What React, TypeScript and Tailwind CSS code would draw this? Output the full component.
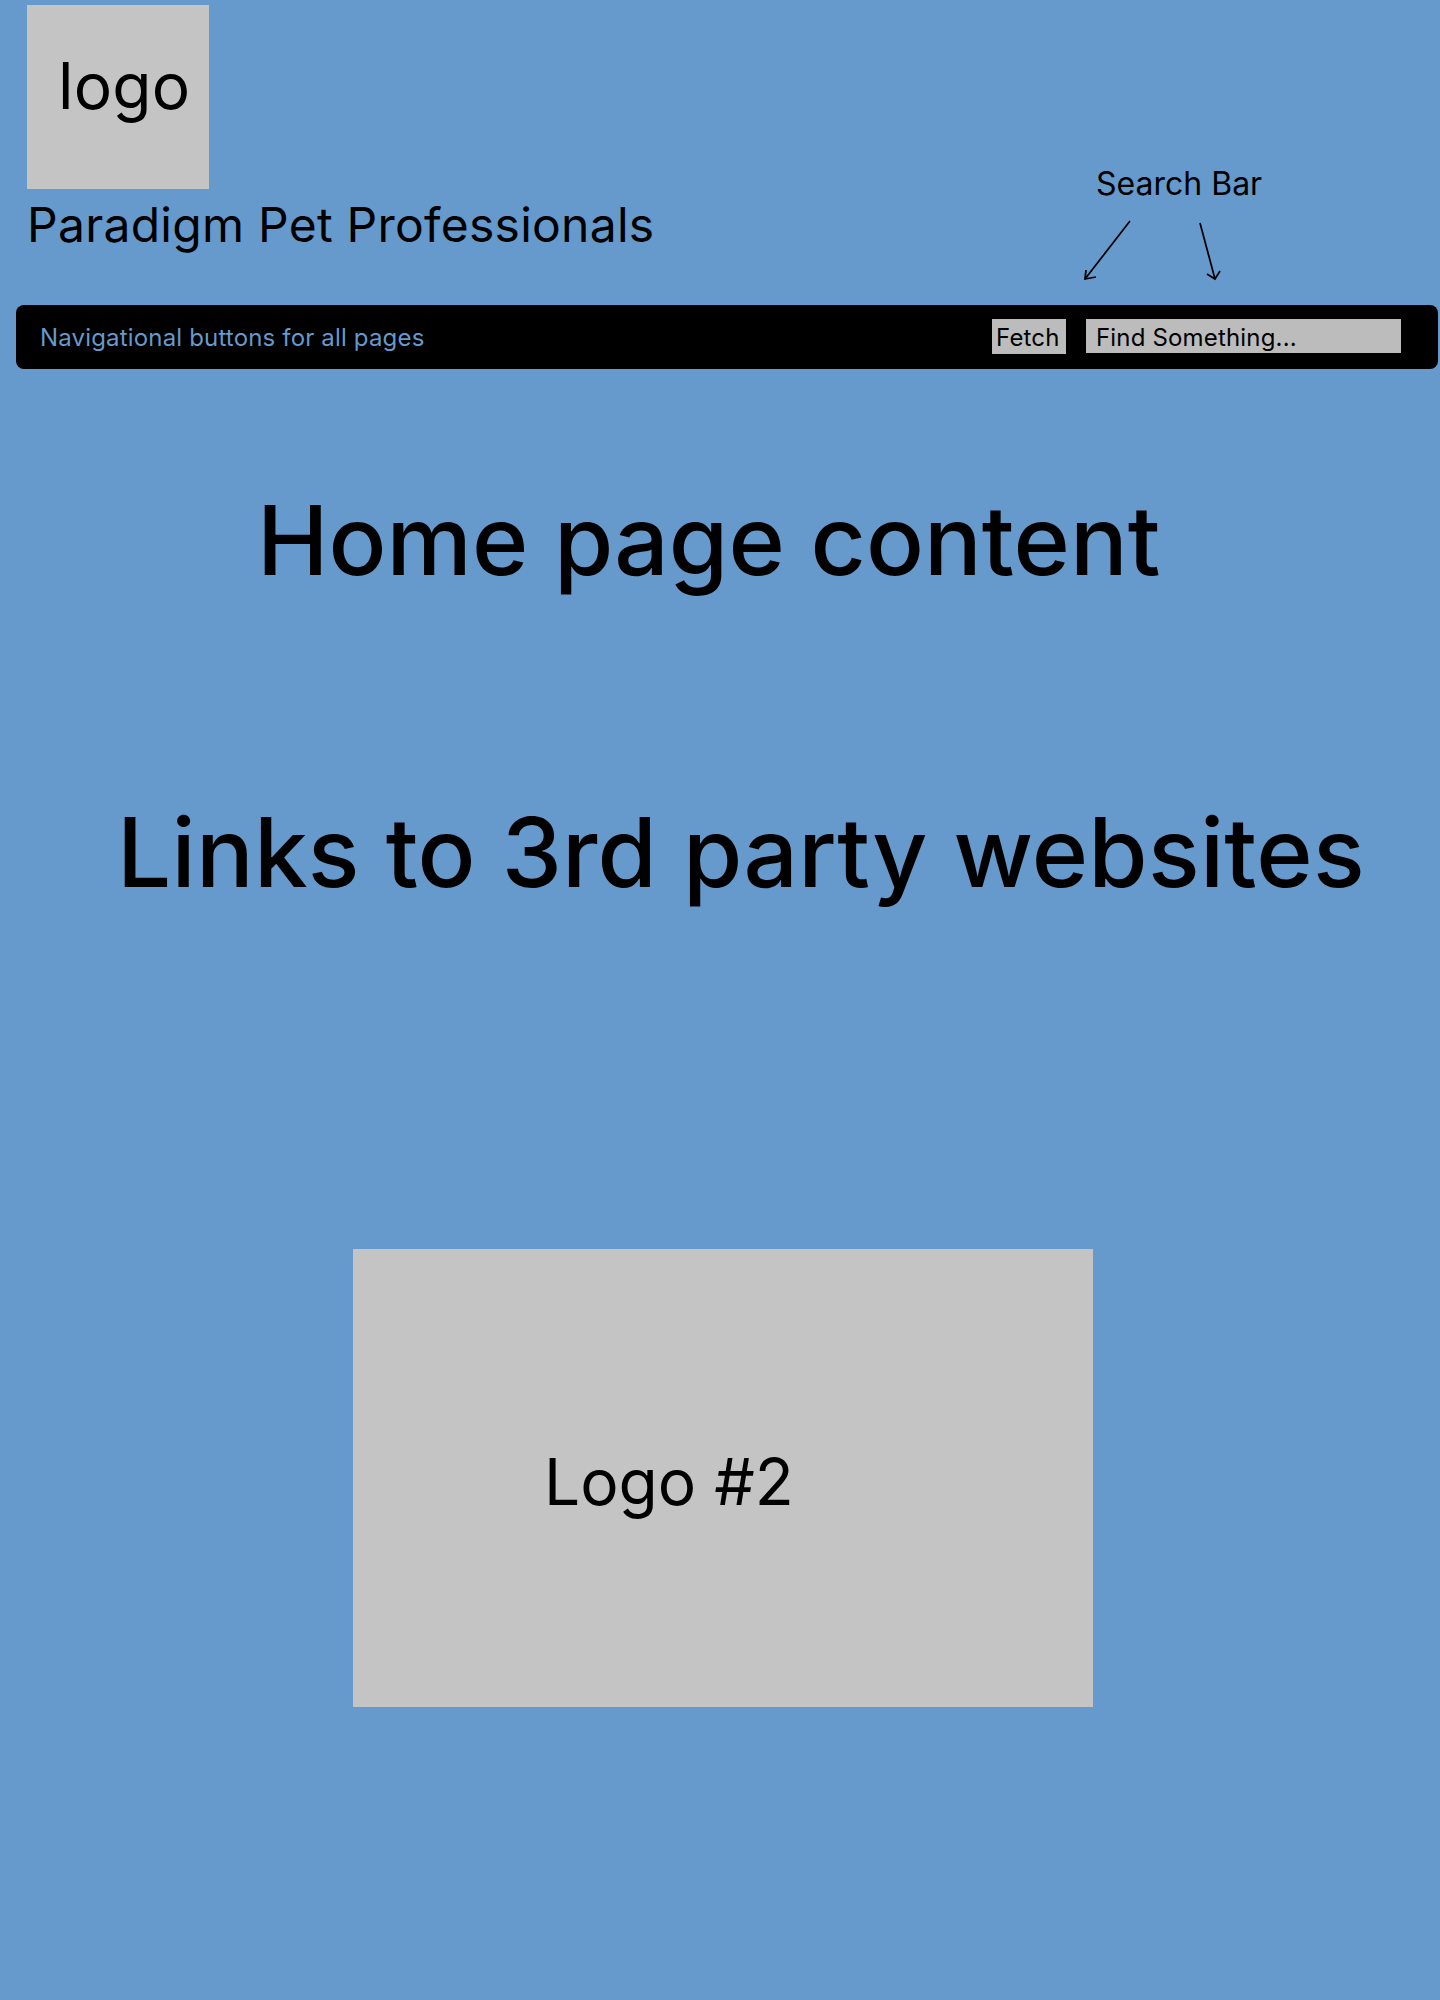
export default function App() {
  return (
    <div className="h-[2000px] w-full overflow-hidden bg-[#6699cc] font-['Inter',sans-serif] text-black">
      {/* Header */}
      <header className="flex h-[305px] items-start justify-between pl-[27px] pt-[5px]">
        <div>
          <div className="h-[184px] w-[182px] bg-[#c4c4c4] pl-[31px] pt-[42px] text-[64px] leading-[77px] tracking-[0.2px]">
            logo
          </div>
          <h1 className="mt-[7px] text-[48px] font-normal leading-[58px] tracking-[0.26px]">
            Paradigm Pet Professionals
          </h1>
        </div>
        <div className="mr-[181px] mt-[159px] w-[176px]">
          <p className="whitespace-nowrap pl-[13px] text-[32px] leading-[39px]">Search Bar</p>
          {/* arrows pointing at the button and the input */}
          <svg width="176" height="80" viewBox="0 0 176 80" fill="none" stroke="black" strokeWidth="1.75">
            <path d="M47 18 L2 76 M3 67 L2 76 L13 74" />
            <path d="M117 20 L132 76 M124 71 L132 76 L137 68" />
          </svg>
        </div>
      </header>

      {/* Nav */}
      <nav className="ml-[16px] flex h-[64px] w-[1422px] items-start rounded-lg bg-black pl-[24px] pt-[14px] text-[24px] leading-[29px] tracking-[0.17px]">
        <span className="pt-[4px] text-[#6699cc]">Navigational buttons for all pages</span>
        <button className="ml-auto h-[35px] w-[74px] bg-[#bcbcbc] pl-[4px] pt-[2px] text-left text-black">
          Fetch
        </button>
        <div className="ml-[20px] mr-[37px] h-[34px] w-[315px] bg-[#bcbcbc] pl-[10px] pt-[4px]">
          Find Something...
        </div>
      </nav>

      <h2 className="ml-[257px] mt-[113px] text-[96px] font-medium leading-[116px] tracking-[0.05px]">Home page content</h2>
      <h2 className="ml-[117px] mt-[196px] text-[96px] font-medium leading-[116px] tracking-[0.24px]">Links to 3rd party websites</h2>

      <div className="ml-[353px] mt-[339px] flex h-[458px] w-[740px] items-center bg-[#c4c4c4] pl-[191px] text-[64px]">
        <span className="mt-[7px]">Logo #2</span>
      </div>
    </div>
  );
}
